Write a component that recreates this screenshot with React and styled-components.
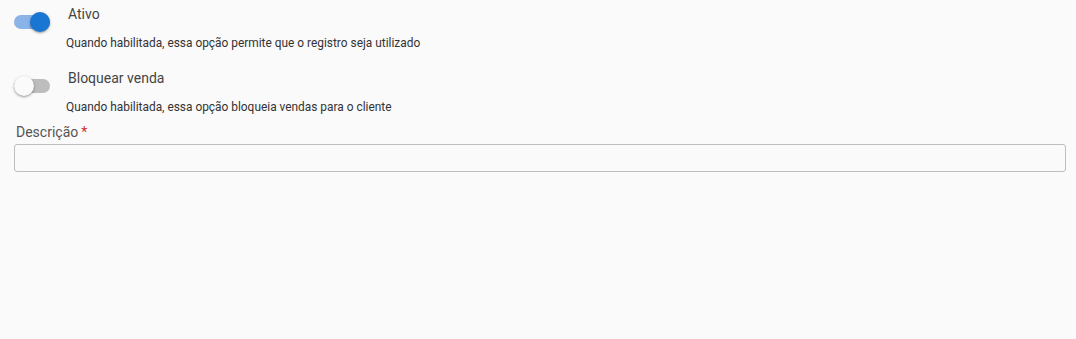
import React from 'react';
import styled, { createGlobalStyle } from 'styled-components';

const GlobalStyle = createGlobalStyle`
  body {
    margin: 0;
    background: #fafafa;
    font-family: Roboto, 'Liberation Sans', sans-serif;
    color: #333;
  }
`;

const Page = styled.div`
  padding: 4px 10px 0 14px;
`;

const ToggleRow = styled.div`
  display: grid;
  grid-template-columns: 52px 1fr;
  margin-bottom: 17px;
`;

const Track = styled.div`
  position: relative;
  margin-top: 11px;
  width: 36px;
  height: 14px;
  border-radius: 7px;
  background: ${p => (p.$on ? '#8ab4e8' : '#bdbdbd')};
`;

const Thumb = styled.div`
  position: absolute;
  top: -3px;
  left: ${p => (p.$on ? '16px' : '0')};
  width: 20px;
  height: 20px;
  border-radius: 50%;
  background: ${p => (p.$on ? '#1976d2' : '#fafafa')};
  box-shadow: 0 1px 3px rgba(0, 0, 0, 0.3), 0 1px 1px rgba(0, 0, 0, 0.14);
`;

const Texts = styled.div`
  display: flex;
  flex-direction: column;
`;

const Label = styled.div`
  font-size: 14px;
  line-height: 20px;
  color: #444;
  padding-left: 2px;
`;

const Hint = styled.div`
  font-size: 11.9px;
  line-height: 16px;
  margin-top: 11px;
  color: #333;
`;

const Field = styled.div`
  margin-top: -9px;
`;

const FieldLabel = styled.div`
  font-size: 14px;
  line-height: 18px;
  color: #555;
  padding-left: 2px;
`;

const Required = styled.span`
  color: #d32f2f;
  margin-left: 3px;
`;

const Input = styled.input`
  display: block;
  box-sizing: border-box;
  width: 1052px;
  height: 28px;
  margin-top: 3px;
  border: 1px solid #bdbdbd;
  border-radius: 3px;
  background: #fafafa;
  font-family: inherit;
  font-size: 14px;
  outline: none;
`;

function Toggle({ on, label, hint }) {
  return (
    <ToggleRow>
      <Track $on={on}>
        <Thumb $on={on} />
      </Track>
      <Texts>
        <Label>{label}</Label>
        <Hint>{hint}</Hint>
      </Texts>
    </ToggleRow>
  );
}

export default function App() {
  return (
    <>
      <GlobalStyle />
      <Page>
        <Toggle on label="Ativo" hint="Quando habilitada, essa opção permite que o registro seja utilizado" />
        <Toggle label="Bloquear venda" hint="Quando habilitada, essa opção bloqueia vendas para o cliente" />
        <Field>
          <FieldLabel>
            Descrição<Required>*</Required>
          </FieldLabel>
          <Input />
        </Field>
      </Page>
    </>
  );
}
